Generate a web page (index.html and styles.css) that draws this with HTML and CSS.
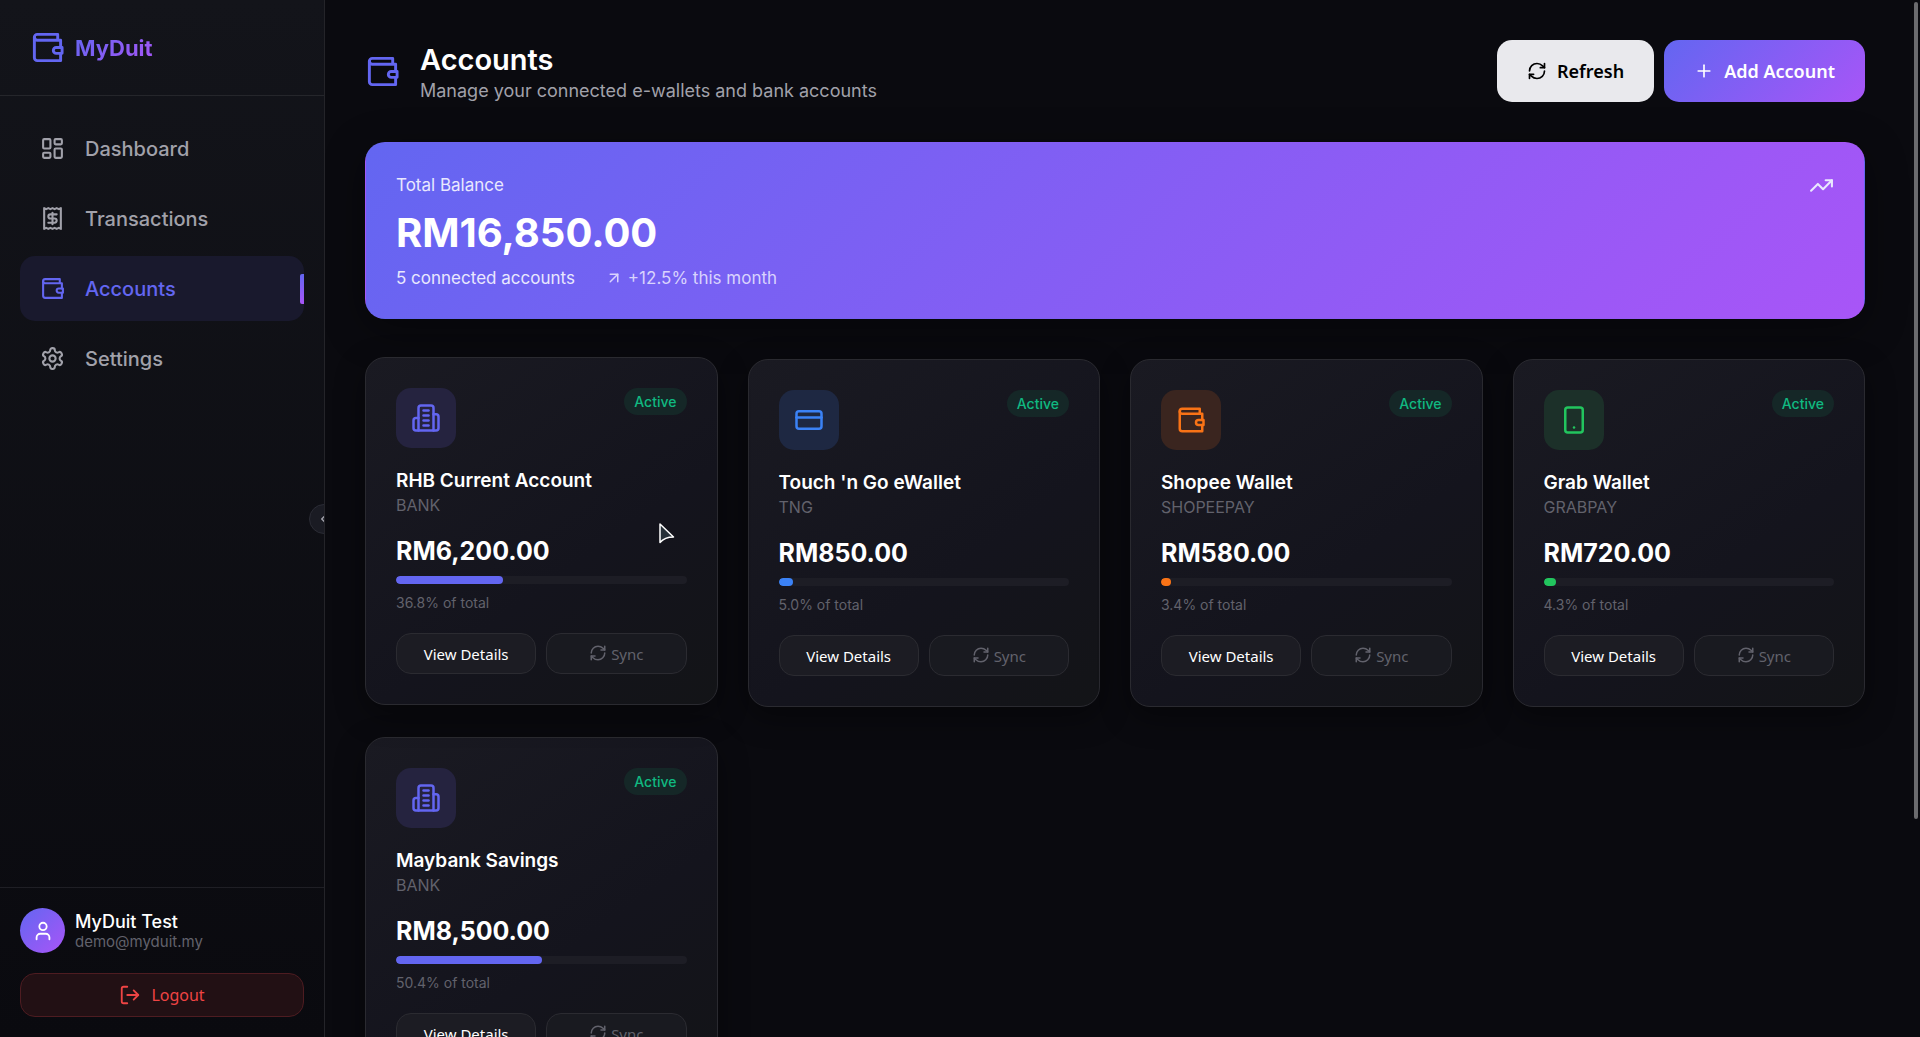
FILE: index.html
```html
<!DOCTYPE html>
<html lang="en">
<head>
    <meta charset="UTF-8">
    <meta name="viewport" content="width=device-width, initial-scale=1.0">
    <title>MyDuit - Accounts</title>
    <link rel="stylesheet" href="styles.css">
</head>
<body>
    <!-- shared icons -->
    <svg class="sprite" aria-hidden="true">
        <symbol id="wallet" viewBox="0 0 24 24"><path d="M21 12V7H5a2 2 0 0 1 0-4h14v4"/><path d="M3 5v14a2 2 0 0 0 2 2h16v-5"/><path d="M18 12a2 2 0 0 0 0 4h4v-4Z"/></symbol>
        <symbol id="dashboard" viewBox="0 0 24 24"><rect x="3" y="3" width="7" height="9" rx="1"/><rect x="14" y="3" width="7" height="5" rx="1"/><rect x="14" y="12" width="7" height="9" rx="1"/><rect x="3" y="16" width="7" height="5" rx="1"/></symbol>
        <symbol id="receipt" viewBox="0 0 24 24"><path d="M4 2v20l2-1 2 1 2-1 2 1 2-1 2 1 2-1 2 1V2l-2 1-2-1-2 1-2-1-2 1-2-1-2 1Z"/><path d="M16 8h-6a2 2 0 1 0 0 4h4a2 2 0 1 1 0 4H8"/><path d="M12 17.5v-11"/></symbol>
        <symbol id="settings" viewBox="0 0 24 24"><path d="M12.22 2h-.44a2 2 0 0 0-2 2v.18a2 2 0 0 1-1 1.73l-.43.25a2 2 0 0 1-2 0l-.15-.08a2 2 0 0 0-2.73.73l-.22.38a2 2 0 0 0 .73 2.73l.15.1a2 2 0 0 1 1 1.72v.51a2 2 0 0 1-1 1.74l-.15.09a2 2 0 0 0-.73 2.73l.22.38a2 2 0 0 0 2.73.73l.15-.08a2 2 0 0 1 2 0l.43.25a2 2 0 0 1 1 1.73V20a2 2 0 0 0 2 2h.44a2 2 0 0 0 2-2v-.18a2 2 0 0 1 1-1.73l.43-.25a2 2 0 0 1 2 0l.15.08a2 2 0 0 0 2.73-.73l.22-.39a2 2 0 0 0-.73-2.73l-.15-.08a2 2 0 0 1-1-1.74v-.5a2 2 0 0 1 1-1.74l.15-.09a2 2 0 0 0 .73-2.73l-.22-.38a2 2 0 0 0-2.73-.73l-.15.08a2 2 0 0 1-2 0l-.43-.25a2 2 0 0 1-1-1.73V4a2 2 0 0 0-2-2z"/><circle cx="12" cy="12" r="3"/></symbol>
        <symbol id="user" viewBox="0 0 24 24"><path d="M19 21v-2a4 4 0 0 0-4-4H9a4 4 0 0 0-4 4v2"/><circle cx="12" cy="7" r="4"/></symbol>
        <symbol id="logout" viewBox="0 0 24 24"><path d="M9 21H5a2 2 0 0 1-2-2V5a2 2 0 0 1 2-2h4"/><path d="m16 17 5-5-5-5"/><path d="M21 12H9"/></symbol>
        <symbol id="chevron-left" viewBox="0 0 24 24"><path d="m15 18-6-6 6-6"/></symbol>
        <symbol id="refresh" viewBox="0 0 24 24"><path d="M3 12a9 9 0 0 1 9-9 9.75 9.75 0 0 1 6.74 2.74L21 8"/><path d="M21 3v5h-5"/><path d="M21 12a9 9 0 0 1-9 9 9.75 9.75 0 0 1-6.74-2.74L3 16"/><path d="M8 16H3v5"/></symbol>
        <symbol id="plus" viewBox="0 0 24 24"><path d="M5 12h14"/><path d="M12 5v14"/></symbol>
        <symbol id="trending-up" viewBox="0 0 24 24"><path d="m22 7-8.500 8.500-5-5L2 17"/><path d="M16 7h6v6"/></symbol>
        <symbol id="arrow-up-right" viewBox="0 0 24 24"><path d="M7 7h10v10"/><path d="M7 17 17 7"/></symbol>
        <symbol id="building" viewBox="0 0 24 24"><path d="M6 22V4a2 2 0 0 1 2-2h8a2 2 0 0 1 2 2v18Z"/><path d="M6 12H4a2 2 0 0 0-2 2v6a2 2 0 0 0 2 2h2"/><path d="M18 9h2a2 2 0 0 1 2 2v9a2 2 0 0 1-2 2h-2"/><path d="M10 6h4"/><path d="M10 10h4"/><path d="M10 14h4"/><path d="M10 18h4"/></symbol>
        <symbol id="credit-card" viewBox="0 0 24 24"><rect x="2" y="5" width="20" height="14" rx="2"/><path d="M2 10h20"/></symbol>
        <symbol id="phone" viewBox="0 0 24 24"><rect x="5" y="2" width="14" height="20" rx="2"/><path d="M12 18h.01"/></symbol>
    </svg>

    <div class="app">
        <aside class="sidebar">
            <div class="sidebar-header">
                <svg class="icon icon-xl"><use href="#wallet"/></svg>
                <span class="logo-text">MyDuit</span>
            </div>
            <nav class="nav">
                <a class="nav-item" href="#"><svg class="icon icon-md"><use href="#dashboard"/></svg>Dashboard</a>
                <a class="nav-item" href="#"><svg class="icon icon-md"><use href="#receipt"/></svg>Transactions</a>
                <a class="nav-item active" href="#"><svg class="icon icon-md"><use href="#wallet"/></svg>Accounts</a>
                <a class="nav-item" href="#"><svg class="icon icon-md"><use href="#settings"/></svg>Settings</a>
            </nav>
            <div class="sidebar-footer">
                <div class="user">
                    <div class="avatar"><svg class="icon icon-user"><use href="#user"/></svg></div>
                    <div>
                        <div class="user-name">MyDuit Test</div>
                        <div class="user-email">demo@myduit.my</div>
                    </div>
                </div>
                <button class="logout"><svg class="icon icon-user"><use href="#logout"/></svg>Logout</button>
            </div>
            <button class="collapse" aria-label="Collapse sidebar"><svg class="icon icon-xs"><use href="#chevron-left"/></svg></button>
        </aside>

        <main class="main">
            <header class="page-header">
                <div class="page-title">
                    <svg class="icon icon-xl"><use href="#wallet"/></svg>
                    <div>
                        <h1>Accounts</h1>
                        <p>Manage your connected e-wallets and bank accounts</p>
                    </div>
                </div>
                <div class="page-actions">
                    <button class="btn btn-light"><svg class="icon icon-sm"><use href="#refresh"/></svg>Refresh</button>
                    <button class="btn btn-primary"><svg class="icon icon-sm"><use href="#plus"/></svg>Add Account</button>
                </div>
            </header>

            <section class="balance">
                <div class="balance-top">
                    <span>Total Balance</span>
                    <svg class="icon icon-md"><use href="#trending-up"/></svg>
                </div>
                <div class="balance-amount">RM16,850.00</div>
                <div class="balance-info">
                    <span>5 connected accounts</span>
                    <span class="change"><svg class="icon icon-xs"><use href="#arrow-up-right"/></svg>+12.5% this month</span>
                </div>
            </section>

            <section class="accounts">
                <article class="card hovered">
                    <div class="card-top">
                        <div class="card-icon indigo"><svg class="icon icon-lg"><use href="#building"/></svg></div>
                        <span class="badge">Active</span>
                    </div>
                    <h3>RHB Current Account</h3>
                    <p class="type">BANK</p>
                    <div class="amount">RM6,200.00</div>
                    <div class="bar"><div class="fill indigo" style="width: 36.8%"></div></div>
                    <div class="share">36.8% of total</div>
                    <div class="card-actions">
                        <button class="btn-small">View Details</button>
                        <button class="btn-small" disabled><svg class="icon icon-sync"><use href="#refresh"/></svg> Sync</button>
                    </div>
                </article>

                <article class="card">
                    <div class="card-top">
                        <div class="card-icon blue"><svg class="icon icon-lg"><use href="#credit-card"/></svg></div>
                        <span class="badge">Active</span>
                    </div>
                    <h3>Touch 'n Go eWallet</h3>
                    <p class="type">TNG</p>
                    <div class="amount">RM850.00</div>
                    <div class="bar"><div class="fill blue" style="width: 5%"></div></div>
                    <div class="share">5.0% of total</div>
                    <div class="card-actions">
                        <button class="btn-small">View Details</button>
                        <button class="btn-small" disabled><svg class="icon icon-sync"><use href="#refresh"/></svg> Sync</button>
                    </div>
                </article>

                <article class="card">
                    <div class="card-top">
                        <div class="card-icon orange"><svg class="icon icon-lg"><use href="#wallet"/></svg></div>
                        <span class="badge">Active</span>
                    </div>
                    <h3>Shopee Wallet</h3>
                    <p class="type">SHOPEEPAY</p>
                    <div class="amount">RM580.00</div>
                    <div class="bar"><div class="fill orange" style="width: 3.4%"></div></div>
                    <div class="share">3.4% of total</div>
                    <div class="card-actions">
                        <button class="btn-small">View Details</button>
                        <button class="btn-small" disabled><svg class="icon icon-sync"><use href="#refresh"/></svg> Sync</button>
                    </div>
                </article>

                <article class="card">
                    <div class="card-top">
                        <div class="card-icon green"><svg class="icon icon-lg"><use href="#phone"/></svg></div>
                        <span class="badge">Active</span>
                    </div>
                    <h3>Grab Wallet</h3>
                    <p class="type">GRABPAY</p>
                    <div class="amount">RM720.00</div>
                    <div class="bar"><div class="fill green" style="width: 4.3%"></div></div>
                    <div class="share">4.3% of total</div>
                    <div class="card-actions">
                        <button class="btn-small">View Details</button>
                        <button class="btn-small" disabled><svg class="icon icon-sync"><use href="#refresh"/></svg> Sync</button>
                    </div>
                </article>

                <article class="card">
                    <div class="card-top">
                        <div class="card-icon indigo"><svg class="icon icon-lg"><use href="#building"/></svg></div>
                        <span class="badge">Active</span>
                    </div>
                    <h3>Maybank Savings</h3>
                    <p class="type">BANK</p>
                    <div class="amount">RM8,500.00</div>
                    <div class="bar"><div class="fill indigo" style="width: 50.4%"></div></div>
                    <div class="share">50.4% of total</div>
                    <div class="card-actions">
                        <button class="btn-small">View Details</button>
                        <button class="btn-small" disabled><svg class="icon icon-sync"><use href="#refresh"/></svg> Sync</button>
                    </div>
                </article>
            </section>
        </main>
    </div>

    <div class="scroll-thumb"></div>
    <svg class="pointer" viewBox="0 0 16 21" aria-hidden="true"><path stroke-width="1.5" d="M1 1v18.500c3-3.500 7-5.500 13.500-5.500Z"/></svg>
</body>
</html>
```

FILE: styles.css
```css
* { margin: 0; padding: 0; box-sizing: border-box; }
html, body { height: 100%; }
body { font-family: Inter, 'Open Sans', sans-serif; background: #0a0a0f; color: #fff; overflow: hidden; }
button { font-family: 'Noto Sans', 'Open Sans', sans-serif; cursor: pointer; }

.sprite { display: none; }
.icon { fill: none; stroke: currentColor; stroke-width: 2; stroke-linecap: round; stroke-linejoin: round; flex-shrink: 0; }
.icon-xs { width: 18px; height: 18px; }
.icon-sync { width: 18px; height: 18px; vertical-align: -2px; }
.icon-sm { width: 20px; height: 20px; }
.icon-user { width: 22px; height: 22px; }
.icon-md { width: 25px; height: 25px; }
.icon-lg { width: 30px; height: 30px; }
.icon-xl { width: 35px; height: 35px; color: #6366f1; }

.app { display: flex; height: 100vh; }

/* sidebar */
.sidebar { position: relative; width: 325px; flex-shrink: 0; display: flex; flex-direction: column; overflow: hidden; background: linear-gradient(180deg, #13141a 0%, #0a0a0f 100%); border-right: 1px solid #242429; }
.sidebar-header { display: flex; align-items: center; gap: 10px; padding: 30px; border-bottom: 1px solid #25262b; }
.logo-text { font-size: 22px; line-height: 36px; font-weight: 700; background: linear-gradient(135deg, #6366f1, #a855f7); -webkit-background-clip: text; background-clip: text; color: transparent; }
.sidebar-header { height: 96px; }
.nav { flex: 1; display: flex; flex-direction: column; gap: 5px; padding: 20px; }
.nav-item { position: relative; display: flex; align-items: center; gap: 20px; height: 65px; padding: 0 20px; border-radius: 15px; color: #a1a1aa; font-size: 20px; font-weight: 500; text-decoration: none; }
.nav-item.active { background: #19192d; color: #6366f1; }
.nav-item.active::after { content: ""; position: absolute; right: 0; top: 18px; width: 4px; height: 30px; border-radius: 2px 0 0 2px; background: linear-gradient(180deg, #6366f1, #a855f7); }
.sidebar-footer { padding: 20px; border-top: 1px solid #1f1f25; }
.user { display: flex; align-items: center; gap: 10px; margin-bottom: 20px; }
.avatar { display: flex; align-items: center; justify-content: center; width: 45px; height: 45px; border-radius: 50%; background: linear-gradient(135deg, #6366f1, #a855f7); }
.user-name { font-size: 18px; line-height: 22px; font-weight: 500; }
.user-email { font-size: 15px; line-height: 18px; color: #62626c; }
.logout { display: flex; align-items: center; justify-content: center; gap: 10px; width: 100%; height: 44px; border: 1px solid #4e1c21; border-radius: 15px; background: #221014; color: #ef4444; font-size: 16px; }
.collapse { position: absolute; right: -15px; top: 504px; display: flex; align-items: center; justify-content: center; width: 30px; height: 30px; border: 1px solid #2b2c35; border-radius: 50%; background: #1a1b23; color: #a1a1aa; }

/* page header */
.main { flex: 1; min-width: 0; padding: 40px 55px 40px 40px; }
.page-header { display: flex; justify-content: space-between; align-items: center; margin-bottom: 40px; }
.page-title { display: flex; align-items: center; gap: 20px; }
.page-title h1 { font-size: 29px; line-height: 40px; font-weight: 600; }
.page-title p { font-size: 18px; line-height: 22px; color: #a1a1aa; }
.page-actions { display: flex; gap: 10px; }
.btn { display: flex; align-items: center; gap: 10px; height: 62px; padding: 0 30px; border: none; border-radius: 15px; font-size: 18px; font-weight: 600; }
.btn-light { background: #e9e9ed; color: #000; }
.btn-primary { background: linear-gradient(135deg, #6366f1, #a855f7); color: #fff; }

/* total balance */
.balance { padding: 30px; margin-bottom: 40px; border: 1px solid transparent; border-radius: 20px; background: linear-gradient(135deg, #6366f1, #a855f7); box-shadow: 0 10px 40px rgba(0,0,0,0.4); color: #e9e8fe; font-size: 17px; }
.balance-top { display: flex; justify-content: space-between; align-items: center; line-height: 25px; }
.balance-amount { margin: 11px 0; font-size: 40px; line-height: 48px; font-weight: 700; color: #fff; }
.balance-info { display: flex; gap: 30px; line-height: 20px; }
.change { display: flex; align-items: center; gap: 5px; color: #d9d3fd; }

/* account cards */
.accounts { display: grid; grid-template-columns: repeat(4, 1fr); gap: 30px; }
.card { padding: 30px; border: 1px solid #2a2a30; border-radius: 20px; background: linear-gradient(145deg, #1a1a22 0%, #14141d 60%, #131417 100%); box-shadow: 0 10px 30px rgba(0,0,0,0.4); }
.card.hovered { transform: translateY(-2px); }
.card-top { display: flex; justify-content: space-between; align-items: flex-start; margin-bottom: 19px; }
.card-icon { display: flex; align-items: center; justify-content: center; width: 60px; height: 60px; border-radius: 15px; }
.card-icon.indigo { background: #25233f; color: #6366f1; }
.card-icon.blue { background: #1e2842; color: #3b82f6; }
.card-icon.orange { background: #3a251f; color: #f97316; }
.card-icon.green { background: #1c3029; color: #22c55e; }
.badge { padding: 0 10px; border-radius: 15px; background: #152727; color: #10b981; font-size: 14px; line-height: 27px; font-weight: 500; }
.card h3 { font-size: 19px; line-height: 28px; font-weight: 600; }
.type { font-size: 16px; line-height: 20px; color: #62626c; }
.amount { margin: 18px 0 7px; font-size: 25px; line-height: 36px; font-weight: 700; }
.bar { height: 8px; border-radius: 4px; background: #1d1d25; overflow: hidden; }
.fill { height: 100%; border-radius: 4px; }
.fill.indigo { background: #6366f1; }
.fill.blue { background: #3b82f6; }
.fill.orange { background: #f97316; }
.fill.green { background: #22c55e; }
.share { margin: 8px 0 20px; font-size: 14px; line-height: 21px; color: #62626c; }
.card-actions { display: flex; gap: 10px; }
.btn-small { flex: 1; height: 41px; border: 1px solid #2b2b31; border-radius: 15px; background: #1c1c23; color: #fff; font-size: 15px; }
.btn-small:disabled { background: #191a20; color: #62626c; cursor: default; }

.scroll-thumb { position: fixed; top: 2px; right: 2px; bottom: 21vh; width: 4px; border-radius: 2px; background: #6b6b6e; }
.pointer { position: fixed; left: 659px; top: 523px; width: 16px; height: 21px; fill: #263038; stroke: #fff; stroke-linejoin: round; }
```
